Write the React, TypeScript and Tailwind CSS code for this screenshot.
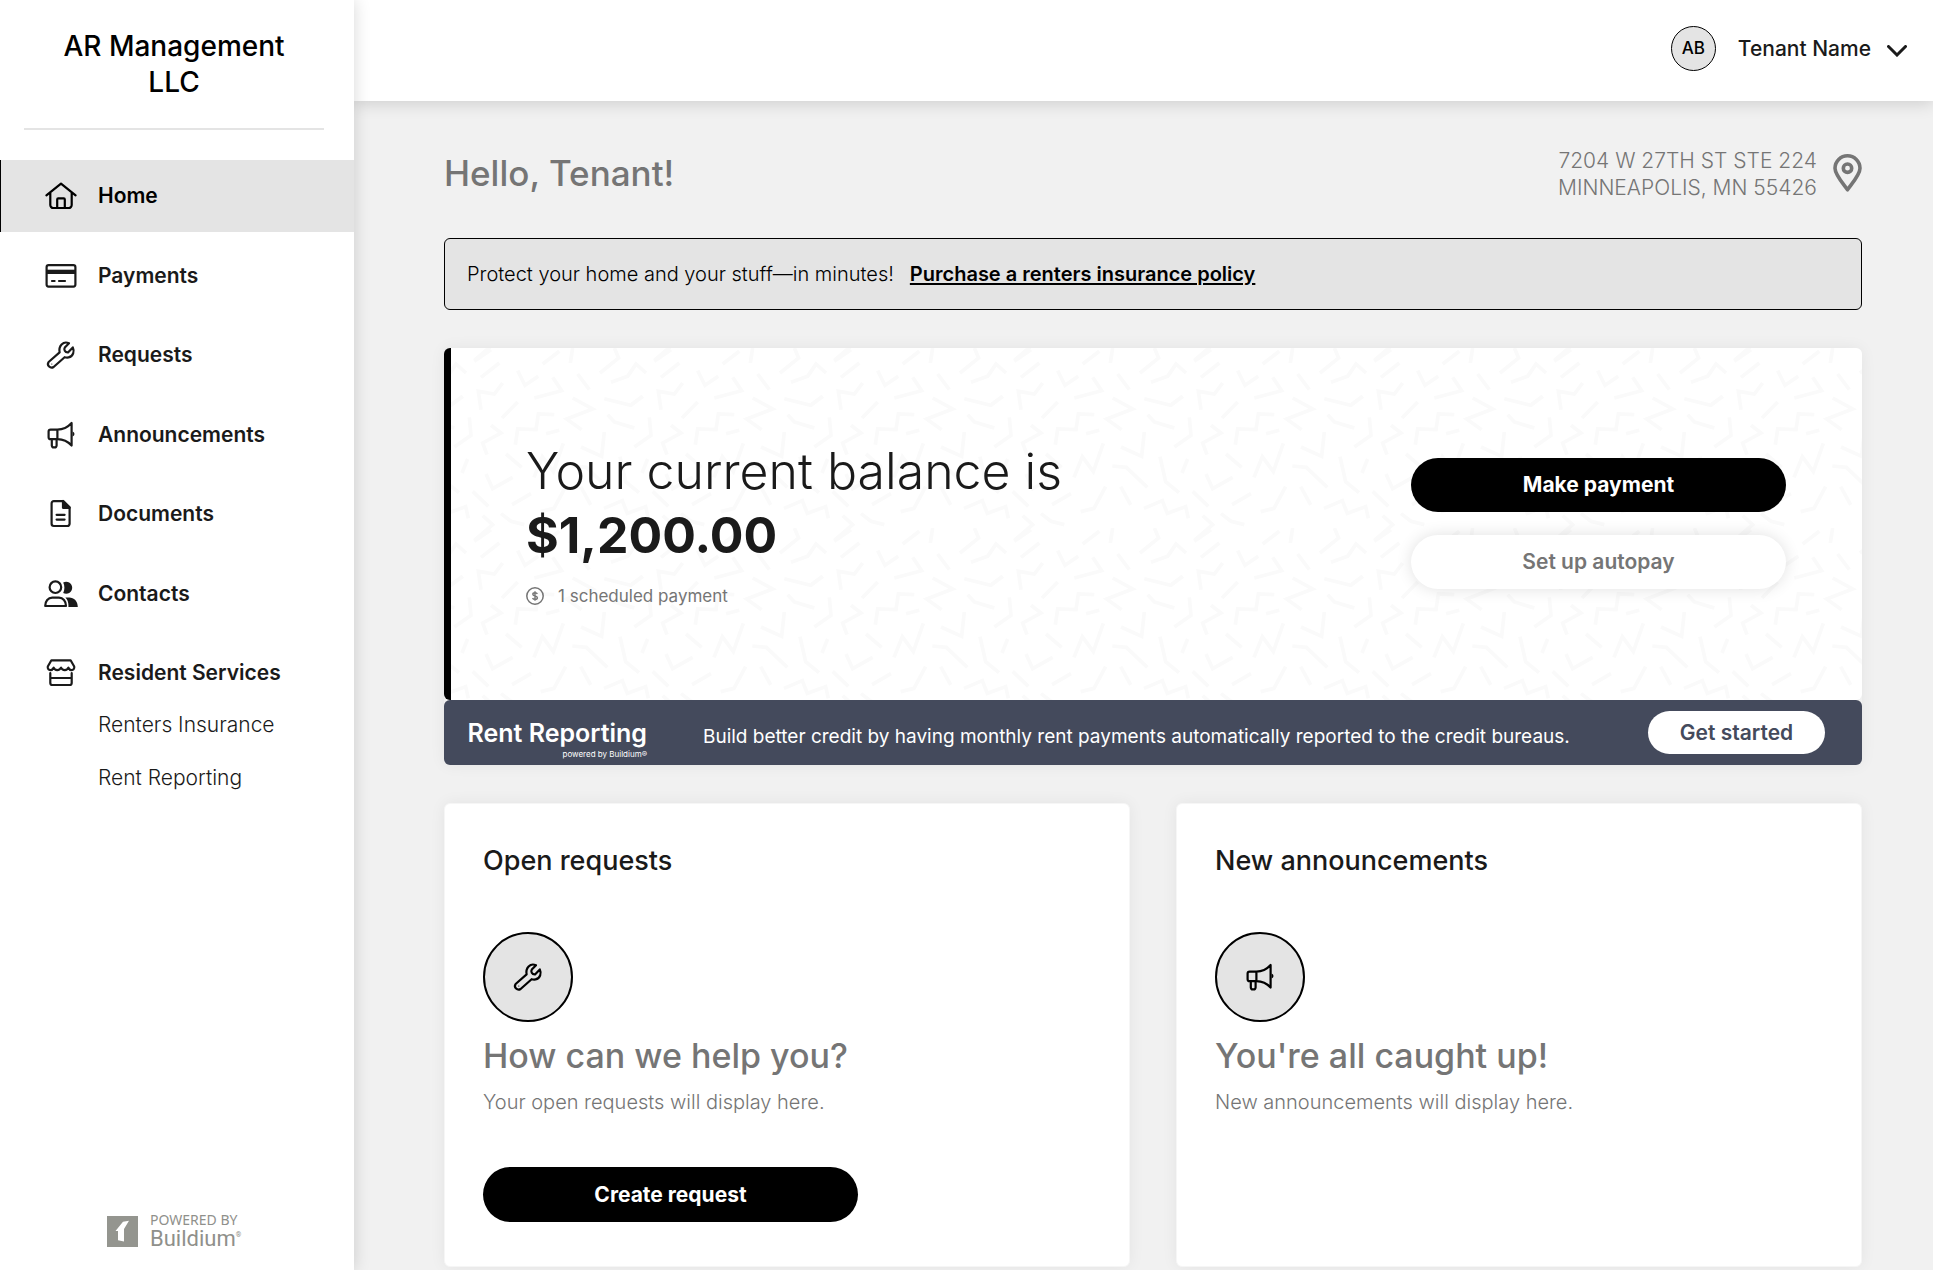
import React from 'react';

const iconProps = {
  viewBox: '0 0 36 32',
  fill: 'none',
  stroke: 'currentColor',
  strokeWidth: 2.2,
  strokeLinecap: 'round' as const,
  strokeLinejoin: 'round' as const,
  className: 'h-8 w-9 shrink-0',
  'aria-hidden': true,
};

const HomeIcon = () => (
  <svg {...iconProps}>
    <path d="M3.4 15.4 18 3.6l14.6 11.8M7.3 12.8V25a3 3 0 0 0 3 3h15.4a3 3 0 0 0 3-3V12.8" />
    <path d="M14.2 28v-8.6a1 1 0 0 1 1-1h5.6a1 1 0 0 1 1 1V28" />
  </svg>
);

const PaymentsIcon = () => (
  <svg {...iconProps}>
    <rect x="3.6" y="5.2" width="28.8" height="21.4" rx="2" />
    <path d="M3.6 9.7h28.8v4.3H3.6z" fill="currentColor" stroke="none" />
    <path d="M9 21h2.6M16 21h6" />
  </svg>
);

const RequestsIcon = () => (
  <svg {...iconProps}>
    <path d="M26 4.2 21.8 8.6c-1.2 1.8 0 5 3.2 4.8l4.8-5c1.8 3.6.6 9.2-4.2 10-1.6.3-2.8.1-4-.2l-11 9.8c-3.2 2-7.2-1.6-5-5l11-9.6c-1.2-6.2 3.4-11.8 9.4-9.2Z" />
    <circle cx="8.8" cy="25" r=".6" fill="currentColor" stroke="none" />
  </svg>
);

const AnnouncementsIcon = () => (
  <svg {...iconProps}>
    <path d="M14.4 10.6H7.6a2 2 0 0 0-2 2v5.6a2 2 0 0 0 2 2h6.8zM14.4 10.6c5.4 0 10.6-2.6 14.2-6.6v22.6c-3.6-4-8.8-6.4-14.2-6.4" />
    <path d="M8.8 20.2v6.4a1.8 1.8 0 0 0 1.8 1.8h1.2a1.8 1.8 0 0 0 1.8-1.8v-6.4" />
    <path d="M29.6 12.6a2.6 2.6 0 0 1 0 5z" fill="currentColor" stroke="none" />
  </svg>
);

const DocumentsIcon = () => (
  <svg {...iconProps}>
    <path d="M20.4 3.2H10.8a2.2 2.2 0 0 0-2.2 2.2v20.4A2.2 2.2 0 0 0 10.8 28h13.6a2.2 2.2 0 0 0 2.2-2.2V9.4z" />
    <path d="M20 3v6.8h6.6z" fill="currentColor" />
    <path d="M13.6 16.8h8M13.6 21.6h8" />
  </svg>
);

const ContactsIcon = () => (
  <svg {...iconProps}>
    <circle cx="12.4" cy="9.2" r="5.8" />
    <path d="M2.2 28c0-4.8 3-8.3 7-8.3H16c4 0 7 3.5 7 8.3z" />
    <path d="M20.200 4.600a6 6 0 1 1 0 10.400c1.600-3.300 1.600-7.100 0-10.400zM22.400 19.500h3.800c4.800 0 8.600 3.700 8.600 9.500h-9.400c.3-4-.6-7.200-3-9.500z" fill="currentColor" stroke="none" />
  </svg>
);

const ServicesIcon = () => (
  <svg {...iconProps}>
    <path d="M8.4 3.3h19.200l3.600 6.200c.6 2.600-1.200 3.800-2.800 3.600-1.800 0-2.600-1.600-3-2.400-.6 1.600-1.800 2.400-3.600 2.400-1.900 0-3.200-.9-3.800-2.400-.6 1.500-1.900 2.400-3.800 2.400-1.800 0-3-.8-3.600-2.400-.4.800-1.200 2.400-3 2.400-1.600.2-3.400-1-2.800-3.600z" />
    <path d="M7.3 16.200v9.800a2 2 0 0 0 2 2h17.400a2 2 0 0 0 2-2v-9.800M7.300 21h21.400" />
  </svg>
);

const navItems = [
  { label: 'Home', icon: HomeIcon, active: true },
  { label: 'Payments', icon: PaymentsIcon },
  { label: 'Requests', icon: RequestsIcon },
  { label: 'Announcements', icon: AnnouncementsIcon },
  { label: 'Documents', icon: DocumentsIcon },
  { label: 'Contacts', icon: ContactsIcon },
  { label: 'Resident Services', icon: ServicesIcon },
];

// Squiggles of the balance card background, one 540-unit tile
const squiggles = [
  '120,5 70,40', '145,45 90,88', '200,68 222,112 262,85', '305,88 332,128 250,150',
  '325,10 275,48', '365,0 358,45', '380,78 415,125', '490,0 503,30 447,75',
  '480,103 530,85 555,48 585,75', '155,105 130,138 82,130 90,185', '35,145 0,170',
  '200,162 153,210', '365,150 425,183 347,213 392,245', '460,152 540,172 575,145',
  '310,200 262,198 255,245 200,243 193,290', '55,208 60,262 10,297',
  '120,232 150,255 95,285 108,320', '285,257 325,247', '470,200 490,222 550,240',
  '390,297 452,325 460,252', '165,318 212,358', '50,333 33,375', '105,378 125,422 185,388',
  '65,430 112,475', '183,470 240,437', '95,503 125,530 70,577', '150,497 180,520 220,530',
  '249,388 274,326 307,371 337,286', '364,354 406,358 469,418', '507,326 524,401 564,434',
  '344,416 309,481 269,491', '389,416 419,471', '459,481 514,458 529,496 584,476 592,511',
];

const CardPattern = () => (
  <svg className="absolute inset-0 h-full w-full" aria-hidden="true">
    <defs>
      <pattern id="squiggles" width="180" height="180" patternUnits="userSpaceOnUse">
        <g transform="scale(0.3333)" fill="none" stroke="#fafafa" strokeWidth="11">
          {[-540, 0].map((x) =>
            [-540, 0].map((y) => (
              <g key={`${x}${y}`} transform={`translate(${x} ${y})`}>
                {squiggles.map((points) => (
                  <polyline key={points} points={points} />
                ))}
              </g>
            ))
          )}
        </g>
      </pattern>
    </defs>
    <rect width="100%" height="100%" fill="url(#squiggles)" />
  </svg>
);

const Sidebar = () => (
  <aside className="relative z-20 flex w-[354px] shrink-0 flex-col bg-white shadow-[0_0_16px_rgba(0,0,0,0.16)]">
    <div className="ml-6 w-[300px] border-b-2 border-[#e4e4e4] pt-7 pb-7">
      <h1 className="px-4 text-center text-[28px] leading-9 font-medium text-black">AR Management LLC</h1>
    </div>

    <nav className="mt-[30px]">
      <ul className="flex h-[549px] flex-col justify-between">
        {navItems.map(({ label, icon: Icon, active }) => (
          <li key={label}>
            <a
              href="#"
              className={
                active
                  ? 'flex h-[72px] items-center gap-[19px] border-l border-black bg-[#e4e4e4] pl-[42px] text-[21px] font-semibold text-black'
                  : 'flex h-[72px] items-center gap-[19px] pl-[43px] text-[21px] font-semibold text-[#1a1a1a]'
              }
            >
              <Icon />
              {label}
            </a>
          </li>
        ))}
      </ul>
      <ul className="mt-0.5 space-y-[26px] pl-[98px] text-[21px] leading-[27px] font-light text-[#1a1a1a]">
        <li><a href="#">Renters Insurance</a></li>
        <li><a href="#">Rent Reporting</a></li>
      </ul>
    </nav>

    <div className="mt-auto flex items-center gap-3 pb-5 pl-[107px] text-[#8f908b]">
      <svg viewBox="0 0 31 31" className="h-[31px] w-[31px]" aria-hidden="true">
        <path fill="#94958f" d="M0 0h31v31H0z" />
        <path fill="#fff" d="M8.500 15 16 5.800l6-1-5 8.200v12.600l-6-1.300V15z" />
      </svg>
      <div>
        <p className="font-['Noto_Sans'] text-[14px] leading-4">POWERED BY</p>
        <p className="flex font-[Roboto] text-[22px] leading-[22px]">
          Buildium<span className="text-[7px] leading-[14px]">®</span>
        </p>
      </div>
    </div>
  </aside>
);

const Header = () => (
  <header className="relative z-10 flex h-[101px] items-center justify-end bg-white pr-[26px] pb-1 shadow-[0_2px_16px_rgba(0,0,0,0.16)]">
    <button className="flex items-center">
      <span className="flex h-[45px] w-[45px] items-center justify-center rounded-full border border-black bg-[#e4e4e4] text-[17px] font-medium text-black">
        AB
      </span>
      <span className="ml-[22px] text-[21px] font-medium text-[#1a1a1a]">Tenant Name</span>
      <svg viewBox="0 0 20 12" className="mt-1 ml-4 h-3 w-5" fill="none" stroke="#1a1a1a" strokeWidth="3" strokeLinecap="round" aria-hidden="true">
        <path d="m1.500 1.500 8.500 8.500 8.500-8.500" />
      </svg>
    </button>
  </header>
);

const BalanceCard = () => (
  <section className="relative flex h-[352px] items-center justify-between overflow-hidden rounded-md border-l-[7px] border-black bg-white pr-[76px] pb-0.5 pl-[75px]">
    <CardPattern />
    <div className="relative">
      <h2 className="text-[50px] leading-[64px] font-light text-[#1a1a1a]">
        Your current balance is
        <strong className="block font-bold">$1,200.00</strong>
      </h2>
      <p className="mt-[18px] flex items-center gap-[14px] text-[17px] leading-[22px] text-[#757575]">
        <svg viewBox="0 0 18 18" className="h-[18px] w-[18px]" fill="none" stroke="currentColor" aria-hidden="true">
          <circle cx="9" cy="9" r="8.200" strokeWidth="1.500" />
          <path d="M11.300 6.900c-.3-.8-1.100-1.200-2.300-1.200-1.400 0-2.200.6-2.200 1.500 0 2.300 4.600 1.200 4.600 3.600 0 1-.9 1.600-2.300 1.600s-2.200-.5-2.500-1.400M9 4.300v9.400" strokeWidth="1.400" />
        </svg>
        1 scheduled payment
      </p>
    </div>
    <div className="relative flex w-[375px] flex-col gap-[23px] text-[21px]">
      <button className="h-[54px] rounded-full bg-black font-bold text-white">Make payment</button>
      <button className="h-[54px] rounded-full bg-white font-semibold text-[#757575] shadow-[0_0_16px_rgba(0,0,0,0.12)]">
        Set up autopay
      </button>
    </div>
  </section>
);

const RentReportingBanner = () => (
  <section className="flex h-[65px] items-center rounded-md bg-[#444a5c] pr-[37px] pl-[22px] text-white">
    <div className="w-[181px] pt-3 text-right whitespace-nowrap">
      <p className="text-[25px] leading-[30px] font-semibold">Rent Reporting</p>
      <p className="text-[8px] leading-[12px]">powered by Buildium®</p>
    </div>
    <p className="ml-14 pt-2 text-[19px] leading-[27px]">
      Build better credit by having monthly rent payments automatically reported to the credit bureaus.
    </p>
    <button className="ml-auto h-[43px] w-[177px] rounded-full bg-white text-[21px] font-semibold text-[#444a5c]">
      Get started
    </button>
  </section>
);

const EmptyCard = ({ title, icon, heading, text, action }: {
  title: string;
  icon: React.ReactNode;
  heading: string;
  text: string;
  action?: string;
}) => (
  <section className="h-[464px] rounded-md border border-[#f6f6f6] bg-white px-[38px] pt-[39px] shadow-[0_0_16px_rgba(0,0,0,0.06)]">
    <h2 className="text-[27px] leading-9 font-medium text-[#1a1a1a]">{title}</h2>
    <div className="mt-[53px] flex h-[90px] w-[90px] items-center justify-center rounded-full border-2 border-black bg-[#e4e4e4] text-black">
      {icon}
    </div>
    <h3 className="mt-3 text-[34px] leading-[44px] font-medium text-[#757575]">{heading}</h3>
    <p className="mt-[11px] text-[20px] leading-[27px] font-light text-[#757575]">{text}</p>
    {action && (
      <button className="mt-[51px] h-[55px] w-[375px] rounded-full bg-black text-[21px] font-bold text-white">{action}</button>
    )}
  </section>
);

const App = () => {
  return (
    <div className="flex min-h-screen bg-[#f1f1f1] font-[Inter,sans-serif]">
      <Sidebar />
      <div className="flex min-w-0 flex-1 flex-col">
        <Header />
        <main className="pt-[45px] pr-[71px] pl-[90px]">
          <div className="flex h-[54px] items-center justify-between text-[#757575]">
            <h2 className="text-[35px] font-medium">Hello, Tenant!</h2>
            <div className="flex items-center gap-4">
              <address className="pt-0.5 text-right text-[21px] leading-[27px] font-light not-italic">
                7204 W 27TH ST STE 224
                <br />
                MINNEAPOLIS, MN 55426
              </address>
              <svg viewBox="0 0 29 38" className="h-[38px] w-[29px]" fill="none" stroke="currentColor" strokeWidth="3.600" strokeLinejoin="round" aria-hidden="true">
                <path d="M14.500 35.800C10 29.400 2 20.600 2 14.200a12.500 12.400 0 0 1 25 0c0 6.400-8 15.200-12.500 21.600Z" />
                <circle cx="14.500" cy="14.200" r="4.200" />
              </svg>
            </div>
          </div>

          <div className="mt-[38px] flex h-[72px] items-center gap-4 rounded-md border border-black bg-[#e4e4e4] px-[22px] text-[20px] text-black">
            <span className="font-light">Protect your home and your stuff—in minutes!</span>
            <a href="#" className="font-semibold underline decoration-2 underline-offset-2">Purchase a renters insurance policy</a>
          </div>

          <div className="mt-[38px] rounded-md shadow-[0_0_16px_rgba(0,0,0,0.06)]">
            <BalanceCard />
            <RentReportingBanner />
          </div>

          <div className="mt-[38px] grid grid-cols-2 gap-[46px]">
            <EmptyCard
              title="Open requests"
              icon={<RequestsIcon />}
              heading="How can we help you?"
              text="Your open requests will display here."
              action="Create request"
            />
            <EmptyCard
              title="New announcements"
              icon={<AnnouncementsIcon />}
              heading="You're all caught up!"
              text="New announcements will display here."
            />
          </div>
        </main>
      </div>
    </div>
  );
};

export default App;
